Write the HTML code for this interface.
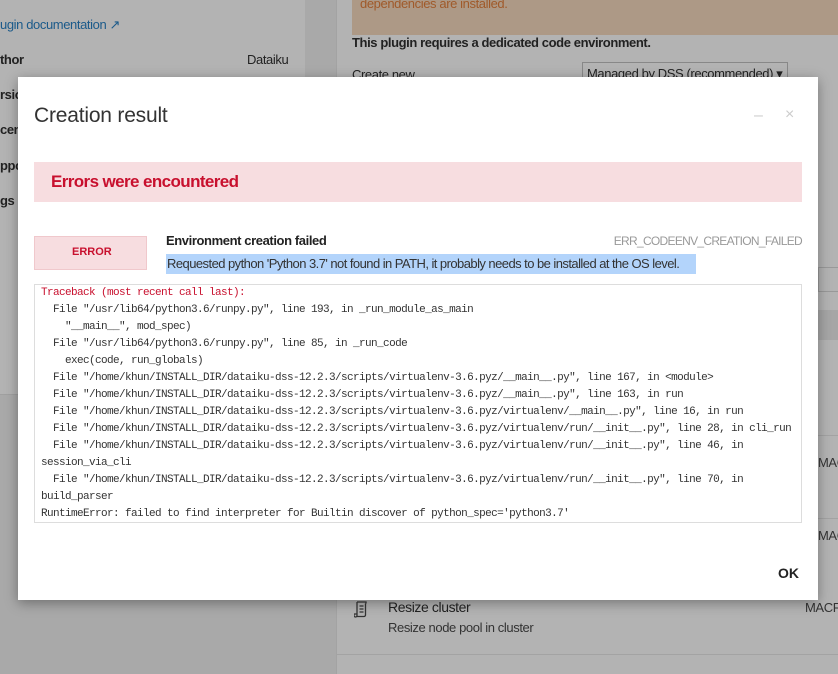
<!DOCTYPE html>
<html><head><meta charset="utf-8"><style>
*{box-sizing:border-box;margin:0;padding:0}
body{width:838px;height:674px;overflow:hidden;background:#a9a9a9;font-family:"Liberation Sans",sans-serif;position:relative}
.a{position:absolute;white-space:nowrap}
.n{font-size:13px;letter-spacing:-0.4px}
.mono{font-family:"Liberation Mono",monospace;font-size:11px;letter-spacing:-0.6px;color:#333;line-height:17px;white-space:pre}
</style></head><body>
<div class="a" style="left:0;top:0;width:305px;height:395px;background:#b3b3b3;border-bottom:1px solid #a0a0a0"></div>
<div class="a" style="left:336px;top:0;width:502px;height:674px;background:#b3b3b3;border-left:1px solid #a3a3a3"></div>
<div class="a" style="left:352px;top:0;width:486px;height:35px;background:#ad9986"></div>
<div class="a n" style="left:360px;top:-4px;color:#a05a2a">dependencies are installed.</div>
<div class="a n" style="left:0;top:17px;color:#1b5a8a">ugin documentation &#x2197;</div>
<div class="a n" style="left:0;top:52px;color:#222;font-weight:bold">thor</div>
<div class="a n" style="left:247px;top:52px;color:#222">Dataiku</div>
<div class="a n" style="left:0;top:87px;color:#222;font-weight:bold">rsio</div>
<div class="a n" style="left:0;top:122px;color:#222;font-weight:bold">cens</div>
<div class="a n" style="left:0;top:158px;color:#222;font-weight:bold">ppo</div>
<div class="a n" style="left:0;top:193px;color:#222;font-weight:bold">gs</div>
<div class="a n" style="left:352px;top:35px;color:#222;font-weight:bold">This plugin requires a dedicated code environment.</div>
<div class="a n" style="left:352px;top:67px;color:#222">Create new</div>
<div class="a" style="left:582px;top:62px;width:206px;height:20px;border:1px solid #888"></div>
<div class="a n" style="left:587px;top:66px;color:#222">Managed by DSS (recommended) ▾</div>
<div class="a" style="left:818px;top:267px;width:20px;height:25px;border:1px solid #999;border-right:none"></div>
<div class="a" style="left:818px;top:310px;width:20px;height:30px;background:#a6a6a6"></div>
<div class="a" style="left:818px;top:435px;width:20px;border-top:1px solid #a3a3a3"></div>
<div class="a" style="left:818px;top:518px;width:20px;border-top:1px solid #a3a3a3"></div>
<div class="a" style="left:337px;top:654px;width:501px;border-top:1px solid #a3a3a3"></div>
<div class="a n" style="left:818px;top:455px;color:#333">MACRO</div>
<div class="a n" style="left:818px;top:528px;color:#333">MACRO</div>
<div class="a n" style="left:805px;top:600px;color:#333">MACRO</div>
<svg class="a" style="left:354px;top:600px" width="14" height="18" viewBox="0 0 14 18" fill="none" stroke="#333" stroke-width="1.3"><path d="M3 2h9v1.5M3 2v13.5a1.5 1.5 0 0 1-3 0V14h3M3 16.5h7a1.5 1.5 0 0 0 1.5-1.5V3.5M5.5 6h4M5.5 9h4M5.5 12h4"/></svg>
<div class="a" style="left:388px;top:599px;font-size:14px;letter-spacing:-0.4px;color:#222">Resize cluster</div>
<div class="a n" style="left:388px;top:620px;color:#333">Resize node pool in cluster</div>

<div class="a" style="left:18px;top:77px;width:800px;height:523px;background:#fff;box-shadow:0 3px 12px rgba(0,0,0,.35)"></div>
<div class="a" style="left:34px;top:104px;font-size:21px;color:#333;letter-spacing:-0.2px">Creation result</div>
<div class="a" style="left:754px;top:107px;font-size:16px;color:#ccc">–</div>
<div class="a" style="left:785px;top:106px;font-size:16px;color:#ccc">×</div>
<div class="a" style="left:34px;top:162px;width:768px;height:40px;background:#f7dde0"></div>
<div class="a" style="left:51px;top:172px;font-size:17px;font-weight:bold;color:#c8102e;letter-spacing:-0.6px">Errors were encountered</div>
<div class="a" style="left:34px;top:236px;width:113px;height:34px;background:#f7dde0;border:1px solid #f0c8cc"></div>
<div class="a" style="left:72px;top:246px;font-size:11px;font-weight:bold;color:#c8102e">ERROR</div>
<div class="a n" style="left:166px;top:233px;font-weight:bold;color:#222">Environment creation failed</div>
<div class="a" style="right:36px;top:234px;font-size:12px;color:#999;letter-spacing:-0.7px">ERR_CODEENV_CREATION_FAILED</div>
<div class="a" style="left:166px;top:254px;width:530px;height:20px;background:#b3d4fb"></div>
<div class="a" style="left:167px;top:256px;font-size:13px;color:#333;letter-spacing:-0.55px">Requested python 'Python 3.7' not found in PATH, it probably needs to be installed at the OS level.</div>
<div class="a" style="left:34px;top:284px;width:768px;height:239px;border:1px solid #ddd"></div>
<div class="a mono" style="left:41px;top:285px"><span style="color:#c8102e">Traceback (most recent call last):</span>
  File "/usr/lib64/python3.6/runpy.py", line 193, in _run_module_as_main
    "__main__", mod_spec)
  File "/usr/lib64/python3.6/runpy.py", line 85, in _run_code
    exec(code, run_globals)
  File "/home/khun/INSTALL_DIR/dataiku-dss-12.2.3/scripts/virtualenv-3.6.pyz/__main__.py", line 167, in &lt;module&gt;
  File "/home/khun/INSTALL_DIR/dataiku-dss-12.2.3/scripts/virtualenv-3.6.pyz/__main__.py", line 163, in run
  File "/home/khun/INSTALL_DIR/dataiku-dss-12.2.3/scripts/virtualenv-3.6.pyz/virtualenv/__main__.py", line 16, in run
  File "/home/khun/INSTALL_DIR/dataiku-dss-12.2.3/scripts/virtualenv-3.6.pyz/virtualenv/run/__init__.py", line 28, in cli_run
  File "/home/khun/INSTALL_DIR/dataiku-dss-12.2.3/scripts/virtualenv-3.6.pyz/virtualenv/run/__init__.py", line 46, in
session_via_cli
  File "/home/khun/INSTALL_DIR/dataiku-dss-12.2.3/scripts/virtualenv-3.6.pyz/virtualenv/run/__init__.py", line 70, in
build_parser
RuntimeError: failed to find interpreter for Builtin discover of python_spec='python3.7'</div>
<div class="a" style="left:778px;top:565px;font-size:14px;font-weight:bold;color:#222">OK</div>
</body></html>
